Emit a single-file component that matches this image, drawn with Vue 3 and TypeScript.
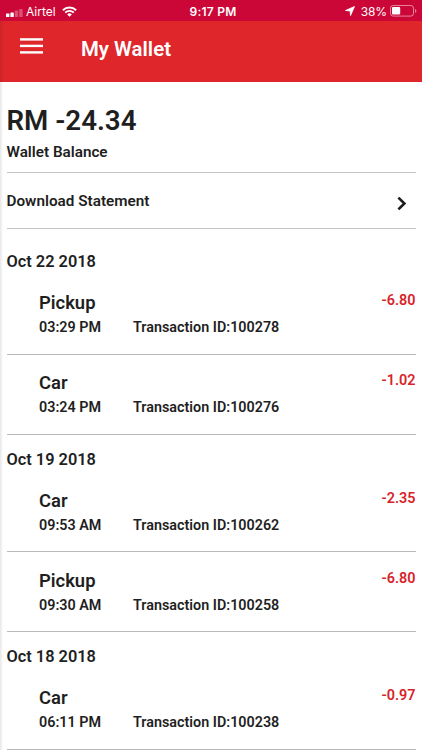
<script setup lang="ts">
interface Transaction {
  id: number
  kind: string
  time: string
  amount: string
}

interface DayGroup {
  date: string
  items: Transaction[]
}

const groups: DayGroup[] = [
  {
    date: 'Oct 22 2018',
    items: [
      { id: 100278, kind: 'Pickup', time: '03:29 PM', amount: '-6.80' },
      { id: 100276, kind: 'Car', time: '03:24 PM', amount: '-1.02' },
    ],
  },
  {
    date: 'Oct 19 2018',
    items: [
      { id: 100262, kind: 'Car', time: '09:53 AM', amount: '-2.35' },
      { id: 100258, kind: 'Pickup', time: '09:30 AM', amount: '-6.80' },
    ],
  },
  {
    date: 'Oct 18 2018',
    items: [{ id: 100238, kind: 'Car', time: '06:11 PM', amount: '-0.97' }],
  },
]
</script>

<template>
  <div class="screen">
    <div class="status">
      <div class="side">
        <svg class="signal" width="17" height="8" viewBox="0 0 17 8" fill="#fff">
          <rect x="0" y="4.6" width="3.4" height="3.4" rx=".6" />
          <rect x="4.4" y="3.4" width="3.4" height="4.6" rx=".6" />
          <rect x="8.8" y="1.6" width="3.4" height="6.4" rx=".6" opacity=".3" />
          <rect x="13.2" y="0" width="3.4" height="8" rx=".6" opacity=".3" />
        </svg>
        <span class="carrier">Airtel</span>
        <svg class="wifi" width="15" height="11" viewBox="0 0 15 11" fill="none" stroke="#fff" stroke-width="1.9">
          <path d="M.9 4.2a9.4 9.4 0 0 1 13.2 0" />
          <path d="M3.2 6.6a6.1 6.1 0 0 1 8.6 0" />
          <path d="M7.5 10.7 5.2 8.4a3.3 3.3 0 0 1 4.6 0z" fill="#fff" stroke="none" />
        </svg>
      </div>
      <div class="clock">9:17 PM</div>
      <div class="side end">
        <svg class="arrow" width="10" height="10" viewBox="0 0 10 10" fill="#fff" stroke="#fff" stroke-width=".8" stroke-linejoin="round">
          <path d="M9.5.5 5.6 9.5 5.1 4.9.5 4.5z" />
        </svg>
        <span class="percent">38%</span>
        <svg class="battery" width="27" height="12" viewBox="0 0 27 12">
          <rect x=".5" y=".5" width="23" height="10.6" rx="2.6" fill="none" stroke="#fff" stroke-opacity=".5" />
          <rect x="2" y="2" width="8.2" height="7.6" rx="1" fill="#fff" />
          <path d="M25 4v3.8q1.4-.6 1.4-1.9T25 4z" fill="#fff" opacity=".5" />
        </svg>
      </div>
    </div>

    <header class="bar">
      <svg class="menu" width="23" height="16" viewBox="0 0 23 16" fill="#fff">
        <rect width="23" height="2.4" y=".2" />
        <rect width="23" height="2.4" y="6.7" />
        <rect width="23" height="2.4" y="13.2" />
      </svg>
      <h1 class="title">My Wallet</h1>
    </header>

    <main class="content">
      <section class="balance">
        <div class="sum">RM -24.34</div>
        <div class="caption">Wallet Balance</div>
      </section>

      <div class="download">
        <span>Download Statement</span>
        <svg class="chevron" width="10" height="15" viewBox="0 0 10 15" fill="none" stroke="#1c1c1c" stroke-width="2.6">
          <path d="M1.4 1.6 7.4 7.5 1.4 13.4" />
        </svg>
      </div>

      <section v-for="group in groups" :key="group.date" class="group">
        <h2 class="date">{{ group.date }}</h2>
        <article v-for="item in group.items" :key="item.id" class="row">
          <div>
            <div class="kind">{{ item.kind }}</div>
            <div class="meta">
              <span class="time">{{ item.time }}</span>
              <span>Transaction ID:{{ item.id }}</span>
            </div>
          </div>
          <div class="amount">{{ item.amount }}</div>
        </article>
      </section>
    </main>
  </div>
</template>

<style>
body {
  margin: 0;
  overflow: hidden;
}
</style>

<style scoped>
.screen {
  box-sizing: border-box;
  width: 422px;
  height: 750px;
  overflow: hidden;
  background: #fff;
  color: #1f1f1f;
  font-family: Roboto, sans-serif;
  font-weight: 600;
}
.status {
  display: grid;
  grid-template-columns: 1fr auto 1fr;
  align-items: center;
  height: 21px;
  padding: 0 5px 0 6px;
  background: #cb0738;
  color: #fff;
  font-family: Inter, sans-serif;
  font-size: 12px;
  line-height: 21px;
}
.side {
  display: flex;
  align-items: center;
  height: 21px;
  font-weight: 400;
}
.end {
  justify-content: flex-end;
}
.signal {
  margin-top: 3px;
}
.carrier {
  margin-left: 3px;
  padding-top: 1px;
}
.wifi {
  margin-left: 6px;
}
.clock {
  padding: 1px 0 0 3px;
  letter-spacing: 0.25px;
}
.arrow {
  margin-right: 6px;
}
.percent {
  margin-right: 3px;
  padding-top: 1px;
  letter-spacing: -0.1px;
}
.bar {
  display: flex;
  align-items: flex-start;
  height: 61px;
  background: linear-gradient(to right, #c92429, #de262b 4px);
  color: #fff;
}
.menu {
  margin: 17px 0 0 20px;
}
.title {
  margin: 16px 0 0 38px;
  font-size: 20.4px;
  line-height: 24px;
  font-weight: 600;
}
.content {
  height: 668px;
  padding: 0 6.5px;
  background: linear-gradient(to right, #e6e6e6, #fff 3px);
}
.balance {
  box-sizing: border-box;
  height: 91px;
  padding-top: 23px;
  border-bottom: 1px solid #c4c4c4;
}
.sum {
  font-size: 27.7px;
  line-height: 32px;
}
.caption {
  margin-top: 5px;
  font-size: 15.25px;
  line-height: 20px;
}
.download {
  display: flex;
  justify-content: space-between;
  box-sizing: border-box;
  height: 56px;
  padding: 18px 9px 0 0;
  margin-bottom: 8.6px;
  border-bottom: 1px solid #c4c4c4;
  font-size: 15.3px;
  line-height: 20px;
}
.chevron {
  margin-top: 5px;
}
.date {
  height: 37px;
  margin: 0;
  padding-top: 14.6px;
  box-sizing: border-box;
  font-size: 16.35px;
  line-height: 20px;
  font-weight: 600;
}
.row {
  display: flex;
  justify-content: space-between;
  box-sizing: border-box;
  height: 80.2px;
  padding: 16.7px 0 0 32.5px;
  border-bottom: 1px solid #b9b9b9;
}
.kind {
  font-size: 18.4px;
  line-height: 24px;
}
.meta {
  display: flex;
  margin-top: 3px;
  font-size: 14.35px;
  line-height: 20px;
}
.time {
  width: 94px;
}
.amount {
  color: #d8232a;
  font-size: 14.4px;
  line-height: 20px;
}
</style>
